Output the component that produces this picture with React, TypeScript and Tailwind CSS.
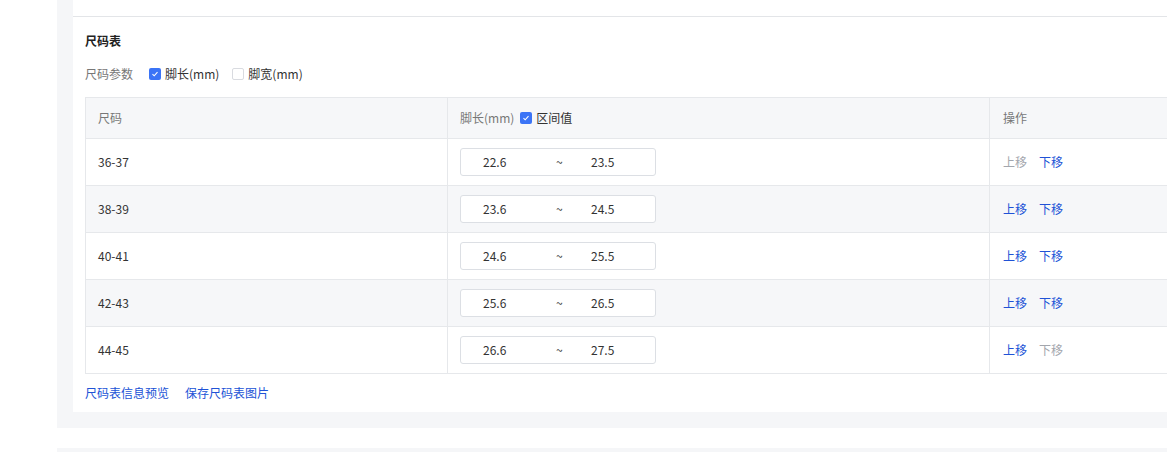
import type { ReactNode } from 'react';

const rows = [
  { size: '36-37', min: '22.6', max: '23.5', up: false, down: true },
  { size: '38-39', min: '23.6', max: '24.5', up: true, down: true },
  { size: '40-41', min: '24.6', max: '25.5', up: true, down: true },
  { size: '42-43', min: '25.6', max: '26.5', up: true, down: true },
  { size: '44-45', min: '26.6', max: '27.5', up: true, down: false },
];

function Check({ checked }: { checked: boolean }) {
  return checked ? (
    <span className="w-3 h-3 rounded-[2px] bg-[#3b74f6] flex items-center justify-center">
      <svg width="8" height="8" viewBox="0 0 8 8" fill="none">
        <path d="M1.5 4.2 L3.2 5.8 L6.5 2.2" stroke="#fff" strokeWidth="1.1" />
      </svg>
    </span>
  ) : (
    <span className="w-3 h-3 rounded-[2px] border border-[#d9dbe0] bg-white" />
  );
}

function Action({ enabled, children }: { enabled: boolean; children: ReactNode }) {
  return (
    <span className={enabled ? 'text-[#2052d6] cursor-pointer' : 'text-[#a3a6ad]'}>{children}</span>
  );
}

export default function App() {
  return (
    <div
      className="w-[1167px] h-[452px] bg-white overflow-hidden text-[12px] text-[#333]"
      style={{ fontFamily: '"Noto Sans CJK SC", "Noto Sans", sans-serif' }}
    >
      <div className="ml-[57px] h-[428px] bg-[#f5f6f8] pl-4 pb-4">
        <div className="bg-white h-full">
          <div className="h-[17px] border-b border-[#e3e5e8]" />
          <div className="px-3">
            <div className="pt-[14px] h-[48px] font-bold text-[12px] text-[#222] leading-[20px]">尺码表</div>
            <div className="flex items-center h-[18px] leading-[18px] mb-[14px]">
              <span className="text-[#777] mr-4">尺码参数</span>
              <label className="flex items-center gap-1 mr-[13px]">
                <Check checked />
                <span>脚长(mm)</span>
              </label>
              <label className="flex items-center gap-1">
                <Check checked={false} />
                <span>脚宽(mm)</span>
              </label>
            </div>
            <div className="border-t border-l border-[#e6e8eb] mr-[-12px]">
              <div className="flex h-[41px] bg-[#f6f7f9] border-b border-[#e6e8eb] text-[#777]">
                <div className="w-[362px] px-3 flex items-center border-r border-[#e6e8eb]">尺码</div>
                <div className="w-[542px] px-3 flex items-center border-r border-[#e6e8eb]">
                  <span>脚长(mm)</span>
                  <span className="ml-[6px] mr-1"><Check checked /></span>
                  <span className="text-[#333]">区间值</span>
                </div>
                <div className="flex-1 px-[13px] flex items-center">操作</div>
              </div>
              {rows.map((r, i) => (
                <div
                  key={r.size}
                  className={`flex h-[47px] border-b border-[#e6e8eb] ${i % 2 === 1 ? 'bg-[#f6f7f9]' : 'bg-white'}`}
                >
                  <div className="w-[362px] px-3 flex items-center border-r border-[#e6e8eb]">{r.size}</div>
                  <div className="w-[542px] px-3 flex items-center border-r border-[#e6e8eb]">
                    <div className="w-[196px] h-[28px] rounded-[3px] border border-[#dcdfe4] bg-white flex items-center">
                      <span className="ml-[22px] w-[73px]">{r.min}</span>
                      <span className="w-[35px]">~</span>
                      <span>{r.max}</span>
                    </div>
                  </div>
                  <div className="flex-1 px-[13px] flex items-center gap-3">
                    <Action enabled={r.up}>上移</Action>
                    <Action enabled={r.down}>下移</Action>
                  </div>
                </div>
              ))}
            </div>
            <div className="flex gap-4 pt-[10px] text-[#2052d6]">
              <span>尺码表信息预览</span>
              <span>保存尺码表图片</span>
            </div>
          </div>
        </div>
      </div>
      <div className="ml-[57px] mt-5 h-2 bg-[#f5f6f8]" />
    </div>
  );
}
